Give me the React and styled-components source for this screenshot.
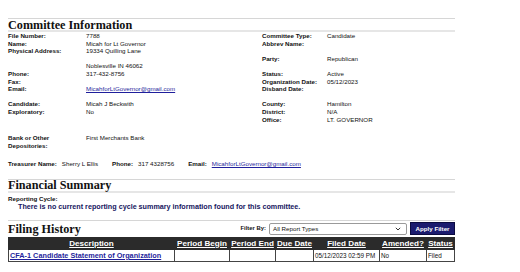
import React from 'react';
import styled, { createGlobalStyle } from 'styled-components';

const GlobalStyle = createGlobalStyle`
  body {
    margin: 0;
    background: #fff;
    font-family: 'Liberation Sans', Arial, sans-serif;
    color: #111;
  }
`;

const Page = styled.div`
  width: 447px;
  padding: 18px 0 0 8px;
  font-size: 6.2px;
  line-height: 7.6px;
`;

const SectionHead = styled.div`
  display: flex;
  align-items: center;
  justify-content: space-between;
  border-top: 1px solid #d6d6d6;
  border-bottom: ${p => (p.$noBottom ? 'none' : '2px solid #e6e6e6')};
  height: ${p => p.$h || 12}px;
  margin-top: ${p => p.$mt || 0}px;
`;

const Title = styled.h2`
  margin: 0;
  font-family: 'Liberation Serif', 'Times New Roman', serif;
  font-weight: bold;
  font-size: 12.2px;
  line-height: 12px;
  color: #111;
`;

const Details = styled.div`
  display: grid;
  grid-template-columns: 78px 176px 65px 1fr;
  grid-auto-rows: 7.6px;
`;

const Label = styled.div`
  font-weight: bold;
  white-space: nowrap;
`;

const Value = styled.div`
  white-space: nowrap;
`;

const A = styled.a`
  color: #1f1f9c;
  text-decoration: underline;
  font-weight: ${p => (p.$big ? 'bold' : 'normal')};
  font-size: ${p => (p.$big ? '7.3px' : 'inherit')};
`;

const Bank = styled.div`
  display: grid;
  grid-template-columns: 78px 1fr;
  margin-top: 11px;
`;

const Treasurer = styled.div`
  display: flex;
  margin-top: 11px;
  span { white-space: nowrap; }
`;

const Pair = styled.div`
  display: flex;
  gap: 5px;
  margin-right: 14px;
`;

const Cycle = styled.div`
  margin-top: 2px;
  font-weight: bold;
`;

const Notice = styled.div`
  padding-left: 10px;
  font-weight: bold;
  font-size: 7.2px;
  color: #16165e;
  white-space: nowrap;
`;

const FilterBar = styled.div`
  display: flex;
  align-items: center;
  gap: 3px;
  font-weight: bold;
  font-size: 5.9px;
`;

const Select = styled.div`
  width: 138px;
  height: 12px;
  border: 1px solid #9a9a9a;
  border-radius: 2px;
  display: flex;
  align-items: center;
  justify-content: space-between;
  padding: 0 5px 0 3px;
  font-weight: normal;
  font-size: 6.2px;
  box-sizing: border-box;
`;

const Button = styled.button`
  height: 13px;
  width: 45px;
  padding: 0;
  background: #1b1b6e;
  border: 1px solid #0b0b40;
  color: #fff;
  font-family: 'Liberation Sans', Arial, sans-serif;
  font-weight: bold;
  font-size: 6.2px;
`;

const Table = styled.table`
  width: 446px;
  table-layout: fixed;
  border-collapse: collapse;
  margin-top: 1px;
  font-size: 6.3px;
`;

const Th = styled.th`
  box-sizing: border-box;
  background: #2b2b2b;
  color: #fff;
  height: 12px;
  padding: 0;
  font-size: 8.1px;
  line-height: 10px;
  text-decoration: underline;
  border: 1px solid #2b2b2b;
  white-space: nowrap;
  width: ${p => p.$w}px;
`;

const Td = styled.td`
  border: 1px solid #444;
  height: 11px;
  padding: 0 1px;
  text-align: left;
  white-space: nowrap;
`;

const rows = [
  ['File Number:', '7788', 'Committee Type:', 'Candidate'],
  ['Name:', 'Micah for Lt Governor', 'Abbrev Name:', ''],
  ['Physical Address:', '19334 Quilling Lane', '', ''],
  ['', '', 'Party:', 'Republican'],
  ['', 'Noblesville IN 46062', '', ''],
  ['Phone:', '317-432-8756', 'Status:', 'Active'],
  ['Fax:', '', 'Organization Date:', '05/12/2023'],
  ['Email:', 'link', 'Disband Date:', ''],
  ['', '', '', ''],
  ['Candidate:', 'Micah J Beckwith', 'County:', 'Hamilton'],
  ['Exploratory:', 'No', 'District:', 'N/A'],
  ['', '', 'Office:', 'LT. GOVERNOR'],
];

const email = 'MicahforLtGovernor@gmail.com';

export default function App() {
  return (
    <Page>
      <GlobalStyle />
      <SectionHead $h={11}>
        <Title>Committee Information</Title>
      </SectionHead>
      <Details>
        {rows.map((r, i) => (
          <React.Fragment key={i}>
            <Label>{r[0]}</Label>
            <Value>{r[1] === 'link' ? <A href="#">{email}</A> : r[1]}</Value>
            <Label>{r[2]}</Label>
            <Value>{r[3]}</Value>
          </React.Fragment>
        ))}
      </Details>
      <Bank>
        <Label>Bank or Other<br />Depositories:</Label>
        <Value>First Merchants Bank</Value>
      </Bank>
      <Treasurer>
        <Pair><Label>Treasurer Name:</Label><span>Sherry L Ellis</span></Pair>
        <Pair><Label>Phone:</Label><span>317 4328756</span></Pair>
        <Pair><Label>Email:</Label><A href="#">{email}</A></Pair>
      </Treasurer>
      <SectionHead $h={11} $mt={11}>
        <Title>Financial Summary</Title>
      </SectionHead>
      <Cycle>Reporting Cycle:</Cycle>
      <Notice>There is no current reporting cycle summary information found for this committee.</Notice>
      <SectionHead $h={15} $mt={10} $noBottom>
        <Title>Filing History</Title>
        <FilterBar>
          Filter By:
          <Select>
            All Report Types
            <svg width="6" height="4" viewBox="0 0 6 4">
              <path d="M0.8 0.8 L3 3 L5.2 0.8" fill="none" stroke="#333" strokeWidth="1" />
            </svg>
          </Select>
          <Button>Apply Filter</Button>
        </FilterBar>
      </SectionHead>
      <Table>
        <thead>
          <tr>
            <Th $w={166}>Description</Th>
            <Th $w={55}>Period Begin</Th>
            <Th $w={46}>Period End</Th>
            <Th $w={38}>Due Date</Th>
            <Th $w={66}>Filed Date</Th>
            <Th $w={47}>Amended?</Th>
            <Th $w={28}>Status</Th>
          </tr>
        </thead>
        <tbody>
          <tr>
            <Td><A href="#" $big>CFA-1 Candidate Statement of Organization</A></Td>
            <Td></Td>
            <Td></Td>
            <Td></Td>
            <Td>05/12/2023 02:59 PM</Td>
            <Td>No</Td>
            <Td>Filed</Td>
          </tr>
        </tbody>
      </Table>
    </Page>
  );
}
